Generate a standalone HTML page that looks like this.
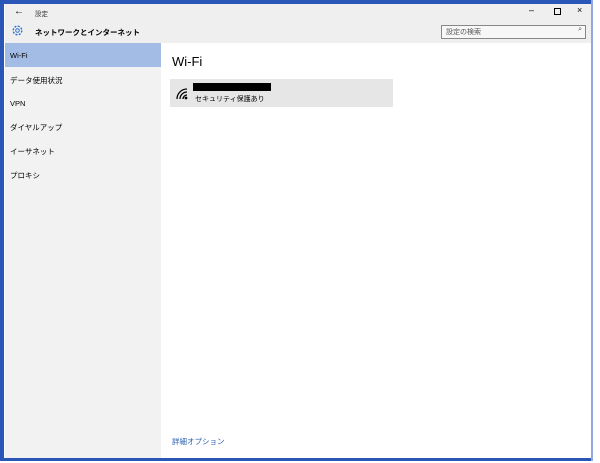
<!DOCTYPE html><html><head><meta charset="utf-8"><style>
body{margin:0;width:600px;height:463px;background:#fff;position:relative;overflow:hidden;font-family:"Liberation Sans","Noto Sans CJK JP",sans-serif;font-size:7.5px;color:#000}
.frame{position:absolute;left:0;top:0;width:591px;height:461px;background:#2a56b8}
.rb{position:absolute;left:591px;top:0;width:2px;height:461px;background:#8fa8e0}
.win{position:absolute;left:4px;top:4px;width:587px;height:454px;background:#fff}
.top{position:absolute;left:1px;top:0;width:586px;height:39px;background:#efefef}
.side{position:absolute;left:1px;top:39px;width:156px;height:415px;background:#f2f2f2}
.sel{position:absolute;left:0;top:0;width:156px;height:24px;background:#a2bce6}
.it{position:absolute;left:5px}
.abs{position:absolute}
</style></head><body><div class="frame"></div><div class="rb"></div><div class="win">
<div class="top">
<div class="abs" style="left:9px;top:2px;font-size:10px">←</div>
<div class="abs" style="left:30px;top:4px;font-size:6.5px;color:#333">設定</div>
<div class="abs" style="left:524px;top:1px;font-size:9px">–</div>
<div class="abs" style="left:549px;top:4px;width:5px;height:5px;border:1px solid #000"></div>
<div class="abs" style="left:572px;top:1px;font-size:9px">×</div>
<svg class="abs" style="left:6px;top:20px" width="13" height="13" viewBox="0 0 13 13"><circle cx="6.5" cy="6.5" r="4.3" fill="none" stroke="#2b6fd1" stroke-width="1.4" stroke-dasharray="2 1.4"/><circle cx="6.5" cy="6.5" r="1.8" fill="none" stroke="#2b6fd1" stroke-width="1"/></svg>
<div class="abs" style="left:30px;top:23px;font-weight:bold;font-size:7.5px">ネットワークとインターネット</div>
<div class="abs" style="left:436px;top:21px;width:143px;height:12px;border:1px solid #888;background:#f7f7f7"><span style="position:absolute;left:4px;top:1px;font-size:7px;color:#555">設定の検索</span><span style="position:absolute;right:3px;top:0;font-size:7px;color:#555">⌕</span></div>
</div>
<div class="side"><div class="sel"></div>
<div class="it" style="top:8px">Wi-Fi</div>
<div class="it" style="top:32px">データ使用状況</div>
<div class="it" style="top:56px">VPN</div>
<div class="it" style="top:79px">ダイヤルアップ</div>
<div class="it" style="top:103px">イーサネット</div>
<div class="it" style="top:127px">プロキシ</div>
</div>
<div class="abs" style="left:168px;top:50px;font-size:13px">Wi-Fi</div>
<div class="abs" style="left:166px;top:75px;width:223px;height:28px;background:#e6e6e6">
<svg class="abs" style="left:6px;top:9px" width="14" height="12" viewBox="0 0 14 12"><g fill="none" stroke="#000" stroke-width="1.3"><path d="M1 11A10 10 0 0 1 11 1"/><path d="M4 11A7 7 0 0 1 11 4"/><path d="M7 11A4 4 0 0 1 11 7"/></g><circle cx="10" cy="10" r="1.4"/></svg>
<div class="abs" style="left:23px;top:4px;width:78px;height:8px;background:#000"></div>
<div class="abs" style="left:25px;top:15px;font-size:7px">セキュリティ保護あり</div>
</div>
<div class="abs" style="left:168px;top:432px;font-size:7.5px;color:#2a5fb0">詳細オプション</div>
</div></body></html>
